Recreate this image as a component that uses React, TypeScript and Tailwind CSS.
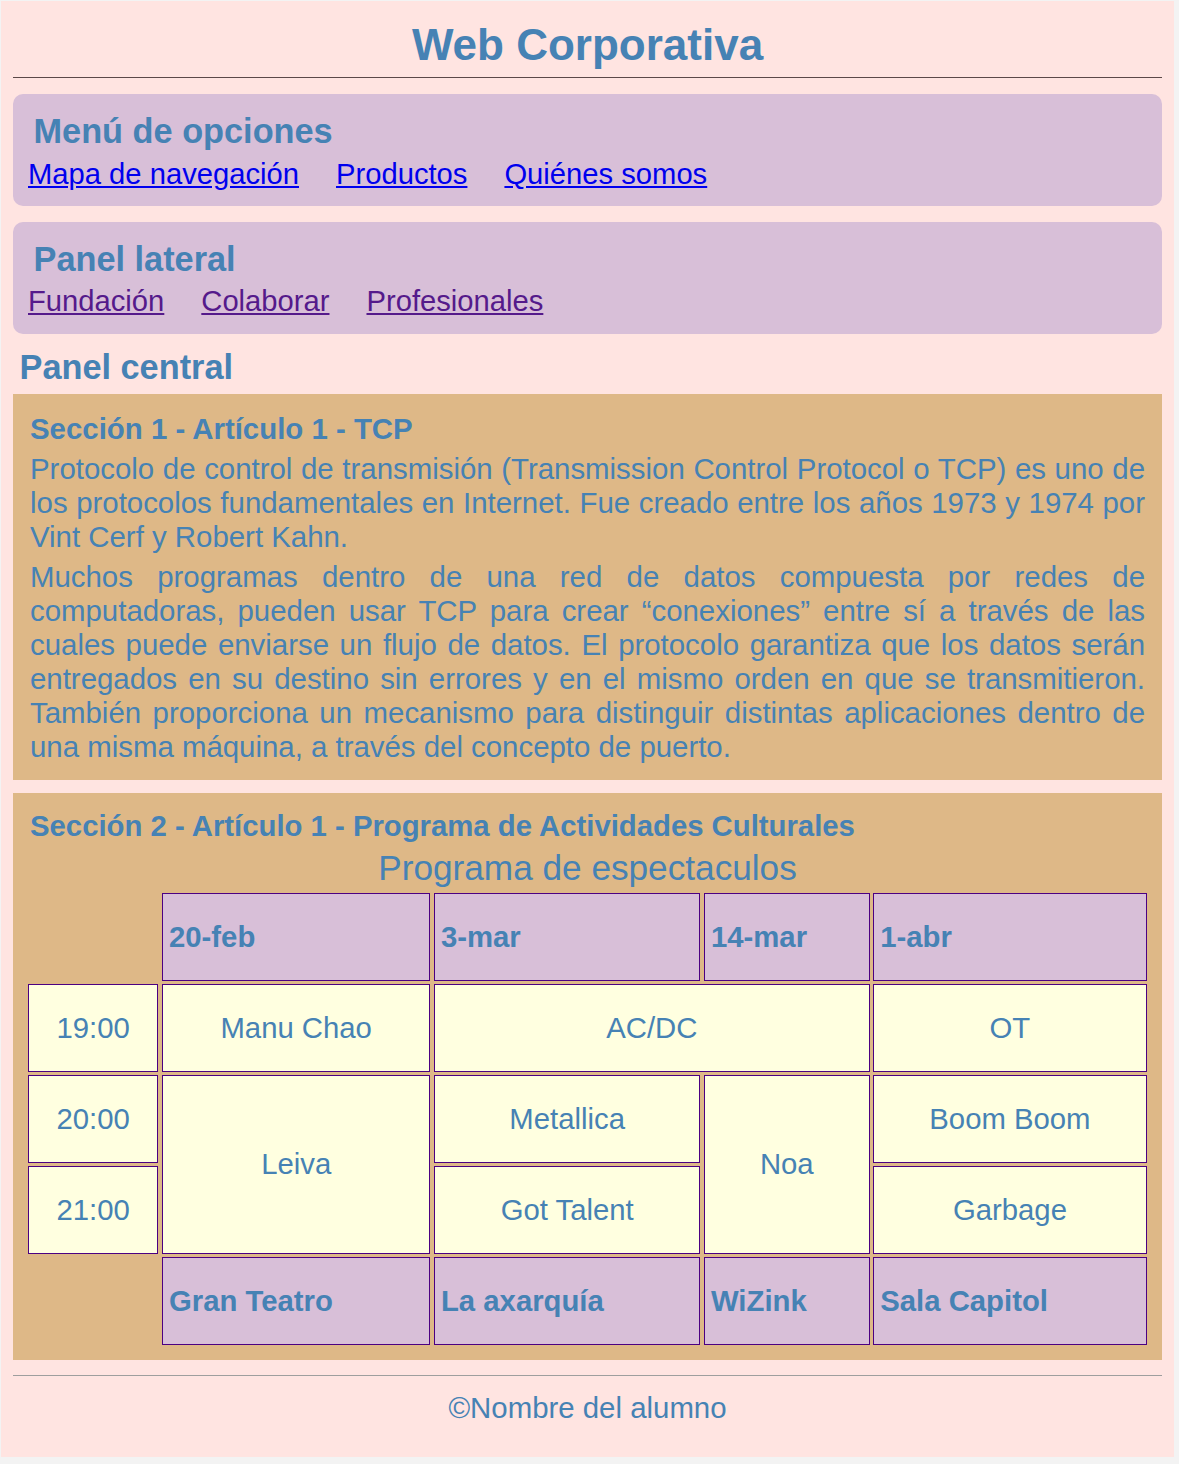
const font = { fontFamily: '"Liberation Sans", Arial, sans-serif' }

const menuLinks = ['Mapa de navegación', 'Productos', 'Quiénes somos']
const sideLinks = ['Fundación', 'Colaborar', 'Profesionales']

function HeadCell({ className = '', children }: { className?: string; children: React.ReactNode }) {
  return (
    <div className={`flex items-center border border-[#4b0082] bg-[#d8bfd8] pl-[6px] text-[29.3px] font-bold ${className}`}>
      {children}
    </div>
  )
}

function Cell({ className = '', children }: { className?: string; children: React.ReactNode }) {
  return (
    <div className={`flex items-center justify-center border border-[#4b0082] bg-[#ffffe0] text-[29.3px] ${className}`}>
      {children}
    </div>
  )
}

export default function App() {
  return (
    <div className="min-h-[1464px] bg-[#f3f3f3] pl-px pt-px" style={font}>
      <div className="h-[1456px] w-[1173px] bg-[#ffe4e1] px-[12px] text-[#4682b4]">
        <header className="border-b border-[#5b4848] pb-[7px] pt-[18px]">
          <h1 className="text-center text-[44px] font-bold leading-[51px]">Web Corporativa</h1>
        </header>

        <nav className="mt-[16px] rounded-[10px] bg-[#d8bfd8] pb-[15px] pl-[15px] pt-[18px]">
          <h2 className="pl-[5.5px] text-[34.3px] font-bold leading-[39px]">Menú de opciones</h2>
          <div className="mt-[7px] flex gap-[37px] text-[29.2px] leading-[33px]">
            {menuLinks.map((l) => (
              <a key={l} href="#" className="text-[#0000ee] underline">
                {l}
              </a>
            ))}
          </div>
        </nav>

        <aside className="mt-[16px] rounded-[10px] bg-[#d8bfd8] pb-[16px] pl-[15px] pt-[18px]">
          <h2 className="pl-[5.5px] text-[34.3px] font-bold leading-[39px]">Panel lateral</h2>
          <div className="mt-[6px] flex gap-[37px] text-[29.2px] leading-[33px]">
            {sideLinks.map((l) => (
              <a key={l} href="#" className="text-[#551a8b] underline">
                {l}
              </a>
            ))}
          </div>
        </aside>

        <h2 className="mt-[14px] pl-[6.5px] text-[34.3px] font-bold leading-[39px]">Panel central</h2>

        <section className="mt-[7px] bg-[#deb887] px-[17px] pb-[16.3px] pt-[17.7px] text-[29.4px] leading-[34px]">
          <h3 className="font-bold">Sección 1 - Artículo 1 - TCP</h3>
          <p className="mt-[6px] text-justify">
            Protocolo de control de transmisión (Transmission Control Protocol o TCP) es uno de los protocolos
            fundamentales en Internet. Fue creado entre los años 1973 y 1974 por Vint Cerf y Robert Kahn.
          </p>
          <p className="mt-[6px] text-justify">
            Muchos programas dentro de una red de datos compuesta por redes de computadoras, pueden usar TCP para
            crear “conexiones” entre sí a través de las cuales puede enviarse un flujo de datos. El protocolo
            garantiza que los datos serán entregados en su destino sin errores y en el mismo orden en que se
            transmitieron. También proporciona un mecanismo para distinguir distintas aplicaciones dentro de una
            misma máquina, a través del concepto de puerto.
          </p>
        </section>

        <section className="mt-[13px] bg-[#deb887] px-[15px] pb-[15.3px] pt-[16.4px]">
          <h3 className="pl-[2px] text-[29.3px] font-bold leading-[34px]">
            Sección 2 - Artículo 1 - Programa de Actividades Culturales
          </h3>
          <p className="mt-[5px] text-center text-[35.2px] leading-[40px]">Programa de espectaculos</p>
          <div className="mt-[4.9px] grid grid-cols-[130.4px_268.4px_266.4px_165.7px_273.4px] grid-rows-[repeat(5,87.4px)] gap-[3.6px]">
            <HeadCell className="col-start-2 row-start-1">20-feb</HeadCell>
            <HeadCell className="col-start-3 row-start-1">3-mar</HeadCell>
            <HeadCell className="col-start-4 row-start-1">14-mar</HeadCell>
            <HeadCell className="col-start-5 row-start-1">1-abr</HeadCell>

            <Cell className="col-start-1 row-start-2">19:00</Cell>
            <Cell className="col-start-2 row-start-2">Manu Chao</Cell>
            <Cell className="col-start-3 col-span-2 row-start-2">AC/DC</Cell>
            <Cell className="col-start-5 row-start-2">OT</Cell>

            <Cell className="col-start-1 row-start-3">20:00</Cell>
            <Cell className="col-start-2 row-start-3 row-span-2">Leiva</Cell>
            <Cell className="col-start-3 row-start-3">Metallica</Cell>
            <Cell className="col-start-4 row-start-3 row-span-2">Noa</Cell>
            <Cell className="col-start-5 row-start-3">Boom Boom</Cell>

            <Cell className="col-start-1 row-start-4">21:00</Cell>
            <Cell className="col-start-3 row-start-4">Got Talent</Cell>
            <Cell className="col-start-5 row-start-4">Garbage</Cell>

            <HeadCell className="col-start-2 row-start-5">Gran Teatro</HeadCell>
            <HeadCell className="col-start-3 row-start-5">La axarquía</HeadCell>
            <HeadCell className="col-start-4 row-start-5">WiZink</HeadCell>
            <HeadCell className="col-start-5 row-start-5">Sala Capitol</HeadCell>
          </div>
        </section>

        <footer className="mt-[15px] border-t border-[#9e9e9e] pt-[15px]">
          <p className="text-center text-[29.4px] leading-[33px]">©Nombre del alumno</p>
        </footer>
      </div>
    </div>
  )
}
